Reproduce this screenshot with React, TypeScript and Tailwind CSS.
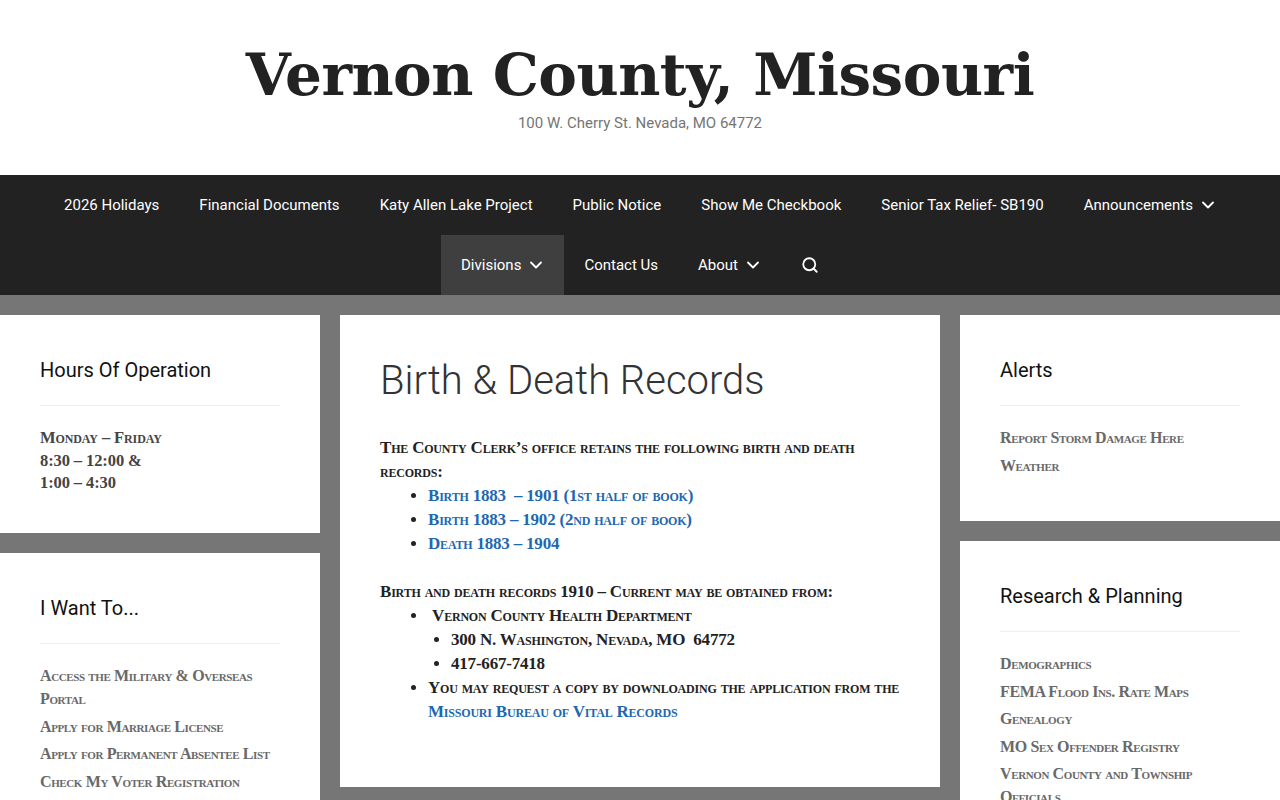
import { ChevronDown, Search } from "lucide-react";

const sc = "font-['Liberation_Serif',serif] [font-variant:small-caps]";

function NavItem({ label, caret, active }: { label: string; caret?: boolean; active?: boolean }) {
  return (
    <a className={`flex h-[60px] items-center px-5 text-[15px] text-white ${active ? "bg-[#3f3f3f]" : ""}`}>
      {label}
      {caret && <ChevronDown className="ml-[5px] mr-[-2px] h-5 w-5" strokeWidth={2.2} />}
    </a>
  );
}

function Widget({ title, children }: { title: string; children: React.ReactNode }) {
  return (
    <section className="bg-white p-10">
      <h2 className="h-[30px] text-[20px] leading-[30px] text-[#111111]">{title}</h2>
      <div className="mt-5 mb-5 border-t border-[#eeeeee]" />
      {children}
    </section>
  );
}

function SideLink({ children }: { children: React.ReactNode }) {
  return <li className={`mb-[4.5px] text-[16px] font-bold leading-[23px] tracking-[-0.38px] text-[#696969] ${sc}`}>{children}</li>;
}

function Blue({ children }: { children: React.ReactNode }) {
  return <a className="text-[#1e68b0]">{children}</a>;
}

export default function App() {
  return (
    <div className="h-screen overflow-hidden bg-[#767676] font-['Roboto',sans-serif]">
      <header className="flex h-[175px] flex-col items-center bg-white pt-[35px]">
        <h1 className="font-['DejaVu_Serif',serif] text-[58px] font-bold leading-[80px] tracking-[-0.5px] text-[#222222]">
          Vernon County, Missouri
        </h1>
        <p className="mt-px text-[15px] leading-[15px] text-[#757575]">100 W. Cherry St. Nevada, MO 64772</p>
      </header>

      <nav className="h-[120px] bg-[#222222] px-10">
        <div className="flex flex-wrap justify-center">
          <NavItem label="2026 Holidays" />
          <NavItem label="Financial Documents" />
          <NavItem label="Katy Allen Lake Project" />
          <NavItem label="Public Notice" />
          <NavItem label="Show Me Checkbook" />
          <NavItem label="Senior Tax Relief- SB190" />
          <NavItem label="Announcements" caret />
          <NavItem label="Divisions" caret active />
          <NavItem label="Contact Us" />
          <NavItem label="About" caret />
          <a className="flex h-[60px] items-center px-5 text-white">
            <Search className="h-[18px] w-[18px]" strokeWidth={2.4} />
          </a>
        </div>
      </nav>

      <main className="mt-5 grid grid-cols-[320px_600px_320px] gap-x-5">
        <aside className="flex flex-col gap-5">
          <Widget title="Hours Of Operation">
            <p className={`h-[67px] pt-px text-[16.5px] font-bold leading-[22.5px] tracking-[-0.1px] text-[#444444] ${sc}`}>
              Monday – Friday
              <br />
              8:30 – 12:00 &amp;
              <br />
              1:00 – 4:30
            </p>
          </Widget>
          <Widget title="I Want To...">
            <ul>
              <SideLink>Access the Military &amp; Overseas Portal</SideLink>
              <SideLink>Apply for Marriage License</SideLink>
              <SideLink>Apply for Permanent Absentee List</SideLink>
              <SideLink>Check My Voter Registration</SideLink>
            </ul>
          </Widget>
        </aside>

        <article className="h-[472px] bg-white px-10 pt-10">
          <h2 className="pt-[2px] text-[40px] font-light leading-[48px] text-[#333333]">Birth &amp; Death Records</h2>
          <div className={`text-[17px] font-bold leading-6 tracking-[-0.2px] text-[#222222] ${sc}`}>
            <p className="mt-[31px]">The County Clerk’s office retains the following birth and death records:</p>
            <ul className="ml-12 list-disc">
              <li><Blue>Birth 1883 &nbsp;– 1901 (1st half of book)</Blue></li>
              <li><Blue>Birth 1883 – 1902 (2nd half of book)</Blue></li>
              <li><Blue>Death 1883 – 1904</Blue></li>
            </ul>
            <p className="mt-6">Birth and death records 1910 – Current may be obtained from:</p>
            <ul className="ml-12 list-disc">
              <li>
                &nbsp;Vernon County Health Department
                <ul className="ml-[23px] list-disc">
                  <li>300 N. Washington, Nevada, MO &nbsp;64772</li>
                  <li>417-667-7418</li>
                </ul>
              </li>
              <li>You may request a copy by downloading the application from the <Blue>Missouri Bureau of Vital Records</Blue></li>
            </ul>
          </div>
        </article>

        <aside className="flex flex-col gap-5">
          <Widget title="Alerts">
            <ul>
              <SideLink>Report Storm Damage Here</SideLink>
              <SideLink>Weather</SideLink>
            </ul>
          </Widget>
          <Widget title="Research &amp; Planning">
            <ul>
              <SideLink>Demographics</SideLink>
              <SideLink>FEMA Flood Ins. Rate Maps</SideLink>
              <SideLink>Genealogy</SideLink>
              <SideLink>MO Sex Offender Registry</SideLink>
              <SideLink>Vernon County and Township Officials</SideLink>
            </ul>
          </Widget>
        </aside>
      </main>
    </div>
  );
}
